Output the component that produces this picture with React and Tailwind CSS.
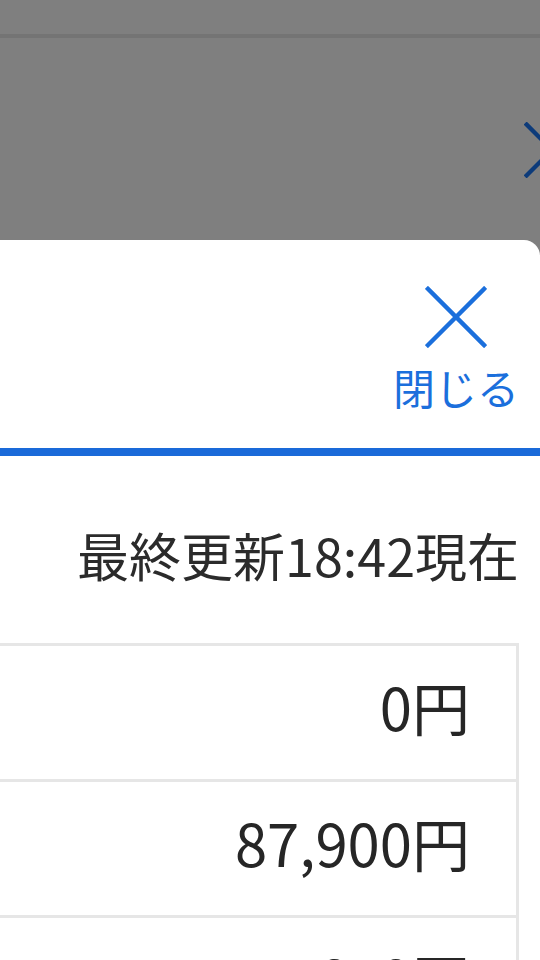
import React from "react";

function XIcon({ size, color, stroke }) {
  return (
    <svg width={size} height={size} viewBox="0 0 64 64" fill="none">
      <path d="M3 3 L61 61 M61 3 L3 61" stroke={color} strokeWidth={stroke} strokeLinecap="square" />
    </svg>
  );
}

export default function App() {
  const rows = ["0円", "87,900円", "55,650円"];
  return (
    <div
      className="relative w-[540px] h-[960px] overflow-hidden bg-white"
      style={{ fontFamily: '"Noto Sans CJK JP", "Noto Sans", sans-serif' }}
    >
      {/* page behind */}
      <div className="h-[240px] bg-white">
        <div className="h-[38px] border-b-[4px] border-[#e8e8e8]" />
        <div className="absolute left-[524px] top-[122px]">
          <XIcon size={56} color="#1a76f5" stroke={5} />
        </div>
      </div>
      {/* overlay */}
      <div className="absolute inset-0 bg-black/50" />
      {/* sheet */}
      <div className="absolute left-[-20px] right-0 top-[240px] bottom-0 bg-white rounded-tr-[16px] flex flex-col overflow-hidden">
        <div className="shrink-0 flex flex-col items-end pt-[46px] pr-[21px] h-[208px]">
          <div className="flex flex-col items-center">
            <XIcon size={62} color="#1b6fdc" stroke={4.5} />
            <div className="mt-[18px] text-[42px] leading-none text-[#1b6fdc]">閉じる</div>
          </div>
        </div>
        <div className="shrink-0 h-[8px] bg-[#1a6ad9]" />
        <div className="shrink-0 flex flex-col pr-[21px]">
          <div className="mt-[73px] text-right text-[52px] leading-none text-[#2b2b2b]">最終更新18:42現在</div>
          <div className="mt-[62px] border-t-[3px] border-r-[3px] border-[#e6e6e6]">
            {rows.map((r) => (
              <div
                key={r}
                className="h-[136px] border-b-[3px] border-[#e6e6e6] flex items-center justify-end pr-[46px] pb-[14px] text-[58px] leading-none text-[#262626]"
              >
                {r}
              </div>
            ))}
          </div>
        </div>
      </div>
    </div>
  );
}
